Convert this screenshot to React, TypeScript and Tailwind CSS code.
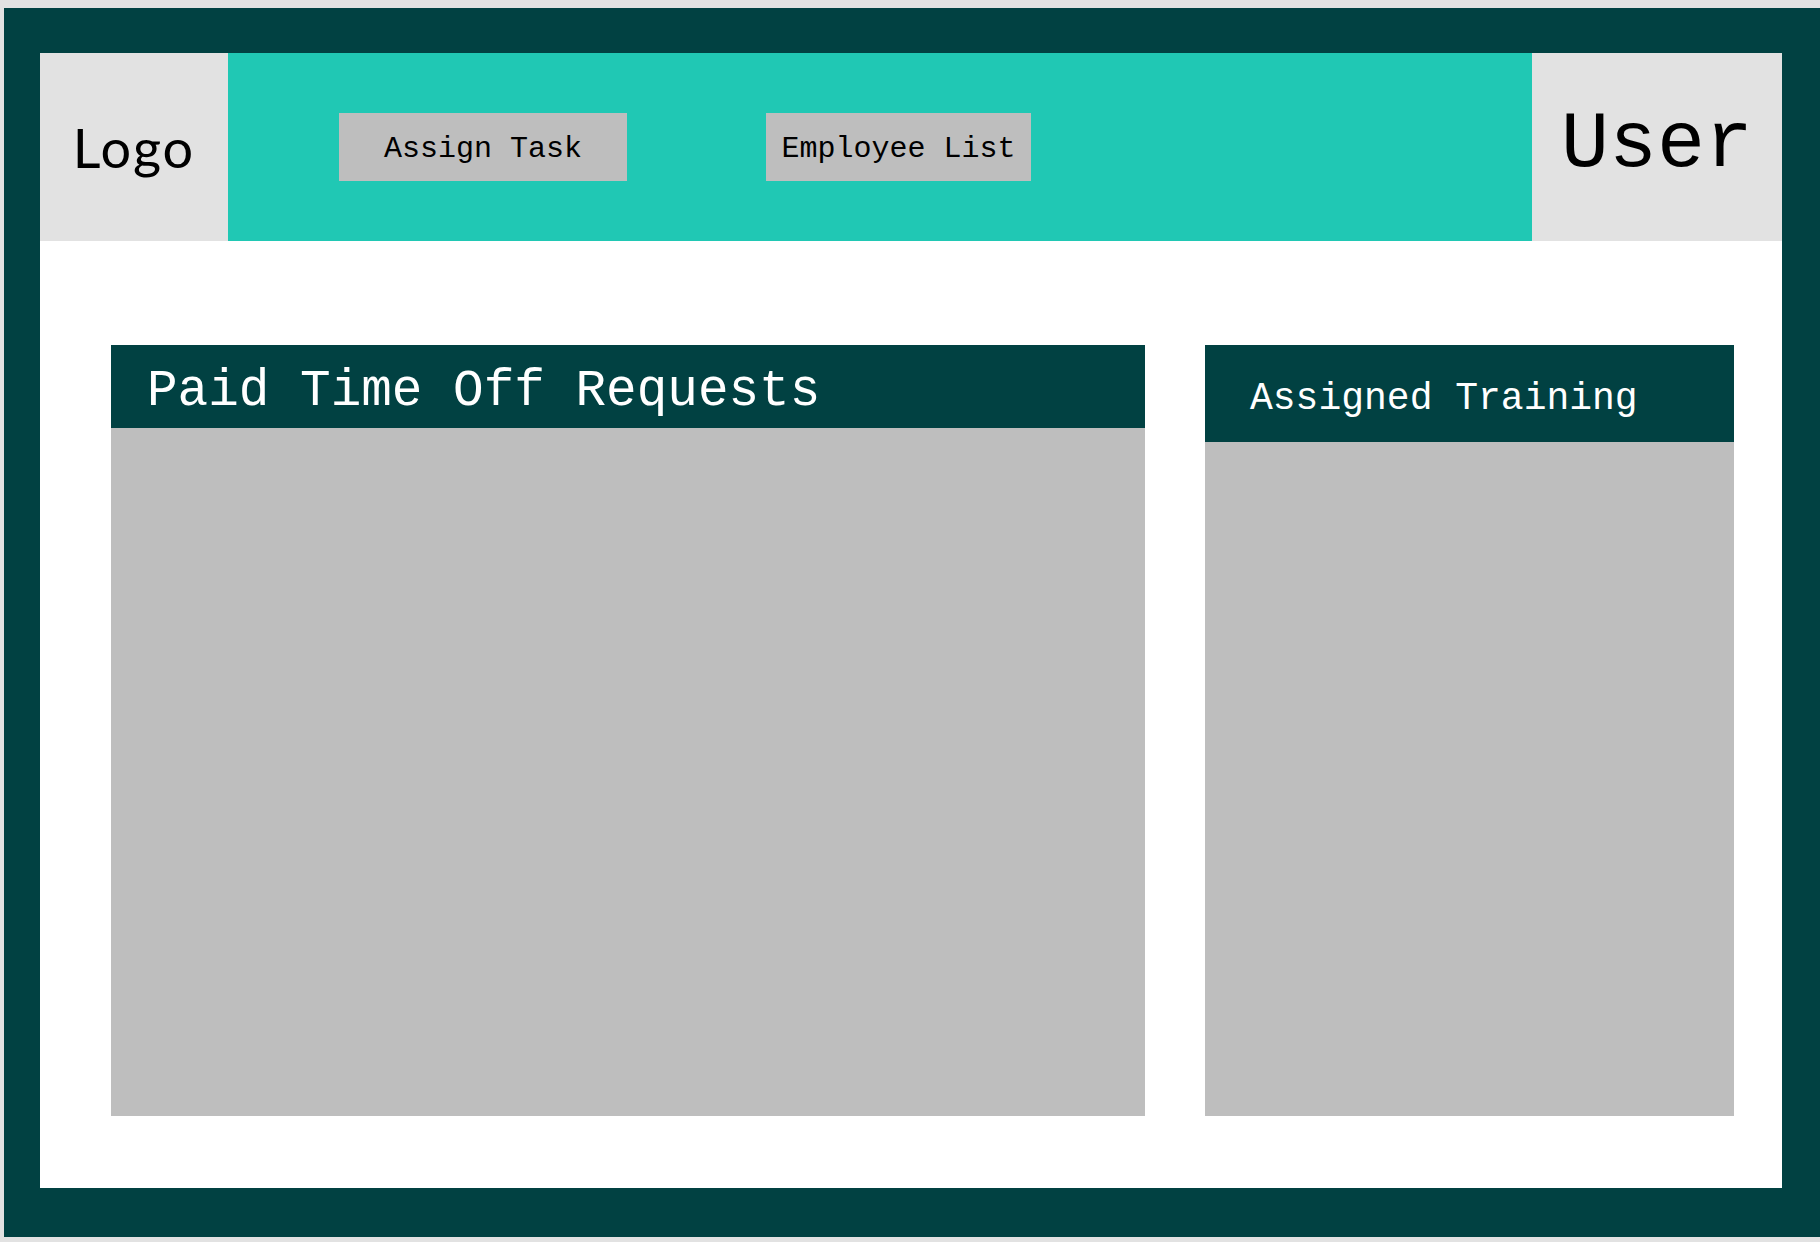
export default function App() {
  const mono = { fontFamily: '"Liberation Mono", "DejaVu Sans Mono", monospace' };

  return (
    <div className="w-full h-[1242px] bg-[#e2e2e2] flex pt-[8px] pl-[4px] pb-[5px]">
      <div className="flex-1 flex bg-[#014142] pt-[45px] pl-[36px] pr-[38px] pb-[49px]">
        <div className="flex-1 flex flex-col bg-white">
          {/* top bar */}
          <header className="h-[188px] flex shrink-0">
            <div className="w-[188px] bg-[#e2e2e2] flex items-center justify-center pt-[2px]">
              <span
                className="text-[54px] text-black leading-none tracking-[2px]"
                style={{ fontFamily: 'Lato, "Noto Sans", sans-serif' }}
              >
                Logo
              </span>
            </div>
            <nav className="flex-1 bg-[#20c8b4] flex items-center pl-[111px] gap-[139px]">
              <button
                className="w-[288px] h-[68px] bg-[#bebebe] text-black text-[30px] leading-none flex items-center justify-center pt-[4px]"
                style={mono}
              >
                Assign Task
              </button>
              <button
                className="w-[265px] h-[68px] bg-[#bebebe] text-black text-[30px] leading-none flex items-center justify-center pt-[4px]"
                style={mono}
              >
                Employee List
              </button>
            </nav>
            <div className="w-[250px] bg-[#e2e2e2] flex items-center justify-center pb-[4px]">
              <span className="text-[80px] text-black leading-none" style={mono}>
                User
              </span>
            </div>
          </header>

          {/* panels */}
          <main className="flex-1 flex gap-[60px] pt-[104px] pl-[71px] pr-[48px] pb-[72px]">
            <section className="w-[1034px] flex flex-col">
              <div className="h-[83px] bg-[#014142] flex items-center pl-[36px] pt-[10px]">
                <h2 className="text-[51px] text-white leading-none" style={mono}>
                  Paid Time Off Requests
                </h2>
              </div>
              <div className="flex-1 bg-[#bebebe]" />
            </section>
            <section className="flex-1 flex flex-col">
              <div className="h-[97px] bg-[#014142] flex items-center pl-[45px] pt-[10px]">
                <h2 className="text-[38px] text-white leading-none" style={mono}>
                  Assigned Training
                </h2>
              </div>
              <div className="flex-1 bg-[#bebebe]" />
            </section>
          </main>
        </div>
      </div>
    </div>
  );
}
